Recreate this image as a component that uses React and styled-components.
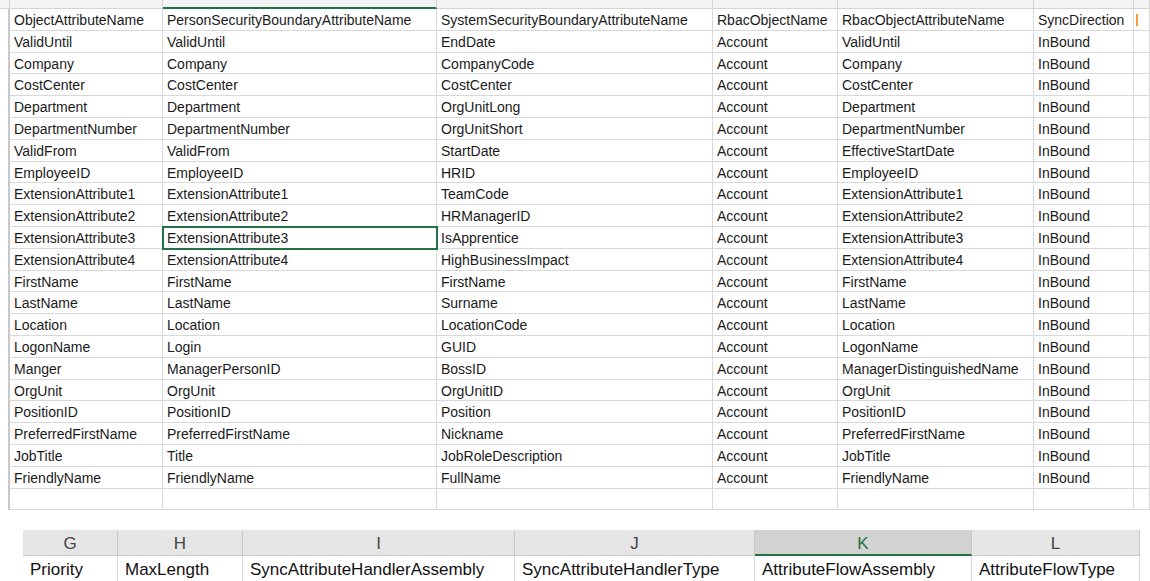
import React from "react";
import styled, { createGlobalStyle } from "styled-components";

const G = createGlobalStyle`
  body{margin:0;background:#fff;font-family:"Liberation Sans","Open Sans",sans-serif;}
`;
const cols = [153, 274, 276, 125, 196, 100, 16];
const tpl = cols.map((c) => c + "px").join(" ");

const Page = styled.div`width:1150px;height:581px;overflow:hidden;position:relative;`;
const Strip = styled.div`display:grid;grid-template-columns:10px ${tpl};height:9px;
  background:#fff;`;
const StripCell = styled.div`border-right:1px solid #d4d4d4;border-bottom:1px solid #d4d4d4;
  background:#f3f3f3;${(p) => p.$sel && "border-bottom:2px solid #217346;"}`;
const Sheet = styled.div`display:grid;grid-template-columns:10px ${tpl};grid-auto-rows:21.8px;`;
const Cell = styled.div`border-right:1px solid #d9d9d9;border-bottom:1px solid #d9d9d9;
  font-size:14px;color:#1a1a1a;padding:3px 0 0 4px;white-space:nowrap;overflow:hidden;
  box-sizing:border-box;position:relative;
  ${(p) => p.$sel && "outline:2px solid #217346;outline-offset:-1px;z-index:1;"}
  ${(p) => p.$gut && "border-right:2px solid #c8c8c8;border-bottom:none;"}`;
const Orange = styled.div`width:2px;height:12px;background:#f0a040;margin:2px 0 0 -2px;`;
const Bottom = styled.div`margin:20px 0 0 23px;display:grid;
  grid-template-columns:95px 125px 272px 240px 217px 168px;`;
const Head = styled.div`height:26px;background:${(p) => (p.$sel ? "#d2d2d2" : "#e6e6e6")};
  border-right:1px solid #c8c8c8;text-align:center;font-size:17px;line-height:28px;
  color:${(p) => (p.$sel ? "#217346" : "#444")};box-sizing:border-box;
  border-bottom:${(p) => (p.$sel ? "2px solid #217346" : "1px solid #c8c8c8")};`;
const BCell = styled.div`height:28px;border-right:1px solid #d9d9d9;border-bottom:1px solid #d9d9d9;
  font-size:17px;padding:4px 0 0 7px;box-sizing:border-box;white-space:nowrap;overflow:hidden;color:#111;`;

const header = ["ObjectAttributeName","PersonSecurityBoundaryAttributeName","SystemSecurityBoundaryAttributeName","RbacObjectName","RbacObjectAttributeName","SyncDirection"];
const data = [
["ValidUntil","ValidUntil","EndDate","ValidUntil"],
["Company","Company","CompanyCode","Company"],
["CostCenter","CostCenter","CostCenter","CostCenter"],
["Department","Department","OrgUnitLong","Department"],
["DepartmentNumber","DepartmentNumber","OrgUnitShort","DepartmentNumber"],
["ValidFrom","ValidFrom","StartDate","EffectiveStartDate"],
["EmployeeID","EmployeeID","HRID","EmployeeID"],
["ExtensionAttribute1","ExtensionAttribute1","TeamCode","ExtensionAttribute1"],
["ExtensionAttribute2","ExtensionAttribute2","HRManagerID","ExtensionAttribute2"],
["ExtensionAttribute3","ExtensionAttribute3","IsApprentice","ExtensionAttribute3"],
["ExtensionAttribute4","ExtensionAttribute4","HighBusinessImpact","ExtensionAttribute4"],
["FirstName","FirstName","FirstName","FirstName"],
["LastName","LastName","Surname","LastName"],
["Location","Location","LocationCode","Location"],
["LogonName","Login","GUID","LogonName"],
["Manger","ManagerPersonID","BossID","ManagerDistinguishedName"],
["OrgUnit","OrgUnit","OrgUnitID","OrgUnit"],
["PositionID","PositionID","Position","PositionID"],
["PreferredFirstName","PreferredFirstName","Nickname","PreferredFirstName"],
["JobTitle","Title","JobRoleDescription","JobTitle"],
["FriendlyName","FriendlyName","FullName","FriendlyName"],
].map((r) => [r[0], r[1], r[2], "Account", r[3], "InBound"]);

const bottom = [["G","Priority"],["H","MaxLength"],["I","SyncAttributeHandlerAssembly"],["J","SyncAttributeHandlerType"],["K","AttributeFlowAssembly"],["L","AttributeFlowType"]];

export default function App() {
  const rows = [header, ...data, ["", "", "", "", "", ""]];
  return (
    <Page>
      <G />
      <Strip>
        <StripCell />
        {cols.map((_, i) => <StripCell key={i} $sel={i === 1} />)}
      </Strip>
      <Sheet>
        {rows.map((r, ri) => (
          <React.Fragment key={ri}>
            <Cell $gut />
            {r.map((t, ci) => <Cell key={ci} $sel={ri === 10 && ci === 1}>{t}</Cell>)}
            <Cell>{ri === 0 && <Orange />}</Cell>
          </React.Fragment>
        ))}
      </Sheet>
      <Bottom>
        {bottom.map(([l], i) => <Head key={l} $sel={l === "K"}>{l}</Head>)}
        {bottom.map(([l, t]) => <BCell key={l}>{t}</BCell>)}
      </Bottom>
    </Page>
  );
}
